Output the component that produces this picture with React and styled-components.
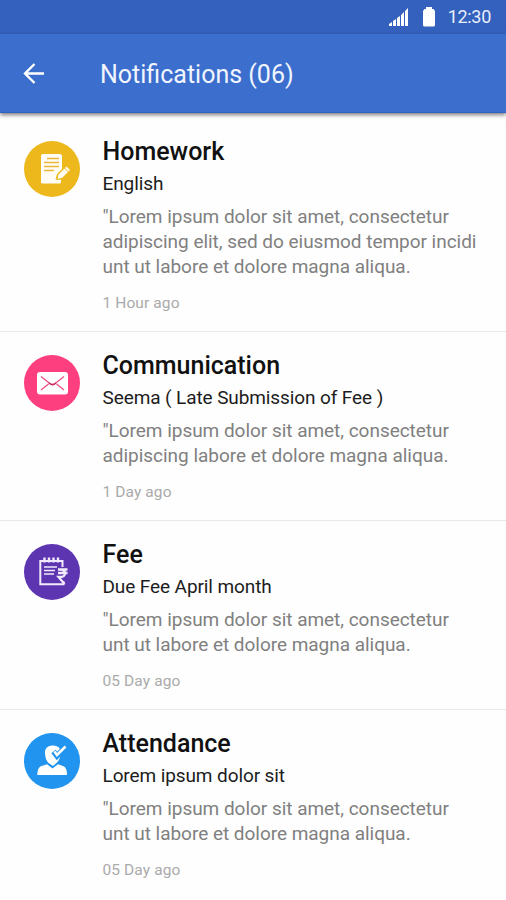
import React from "react";
import styled, { createGlobalStyle } from "styled-components";

const GlobalStyle = createGlobalStyle`
  * {
    box-sizing: border-box;
  }

  body {
    margin: 0;
    background: #fefefe;
    font-family: Roboto, "Liberation Sans", sans-serif;
    overflow: hidden;
  }
`;

const Screen = styled.div`
  width: 506px;
  height: 900px;
  overflow: hidden;
  background: #fefefe;
`;

const StatusBar = styled.div`
  height: 34px;
  padding: 0 15px 0 0;
  display: flex;
  align-items: center;
  justify-content: flex-end;
  background: #3461bd;
  color: #e6edfb;
`;

const SignalIcon = styled.svg`
  width: 22px;
  height: 20px;
  margin-right: 13px;
`;

const BatteryIcon = styled.svg`
  width: 12px;
  height: 20px;
  margin-right: 13px;
`;

const Clock = styled.span`
  font-size: 18px;
  line-height: 34px;
  letter-spacing: -0.3px;
`;

const Header = styled.header`
  height: 79px;
  padding: 0 22px;
  display: flex;
  align-items: center;
  background: #3c6ecd;
  border-bottom: 1px solid #2e63c4;
  box-shadow: 0 2px 4px rgba(0, 0, 0, 0.5);
`;

const BackButton = styled.button`
  width: 24px;
  height: 24px;
  padding: 0;
  margin-right: 54px;
  border: 0;
  background: none;
  display: flex;
`;

const HeaderTitle = styled.h1`
  margin: 4px 0 0;
  font-size: 25px;
  font-weight: 400;
  line-height: 32px;
  color: #f1f5fd;
`;

const List = styled.ul`
  margin: 0;
  padding: 5px 0 0;
  list-style: none;
`;

const Item = styled.li`
  display: flex;
  align-items: flex-start;
  padding: 19px 0 18.4px 24px;
  border-bottom: 1px solid #e8e8e8;

  &:last-child {
    border-bottom: 0;
  }
`;

const Avatar = styled.div`
  width: 56px;
  height: 56px;
  margin: 4px 22.5px 0 0;
  flex: none;
  border-radius: 50%;
  background: ${(props) => props.$color};

  svg {
    display: block;
  }
`;

const Content = styled.div`
  white-space: nowrap;
`;

const Title = styled.h2`
  margin: 0;
  font-size: 25px;
  font-weight: 500;
  line-height: 30px;
  letter-spacing: 0;
  color: #111;
`;

const Subject = styled.p`
  margin: 5px 0 0;
  font-size: 19px;
  line-height: 24px;
  letter-spacing: -0.1px;
  color: #1c1c1c;
`;

const Message = styled.p`
  margin: 9px 0 0;
  font-size: 19px;
  line-height: 24.8px;
  letter-spacing: -0.03px;
  white-space: pre-line;
  color: #808080;
`;

const Time = styled.p`
  margin: 13.2px 0 0;
  font-size: 15.5px;
  line-height: 20px;
  letter-spacing: 0.1px;
  color: #aaa;
`;

const HomeworkIcon = () => (
  <svg width="56" height="56" viewBox="0 0 56 56" fill="none">
    <path
      d="M19 13h17a2 2 0 0 1 2 2v13l-5 5-1.500 5.500h5.500v2.500a1.500 1.500 0 0 1-1.500 1.500H18.500a1.500 1.500 0 0 1-1.500-1.500V15a2 2 0 0 1 2-2z"
      fill="#fffdf5"
    />
    <path d="M23 17.500h12M20 21.500h15M20 25.500h15M20 29.500h10" stroke="#ecb83a" strokeWidth="1.700" />
    <path d="M33 38.500l1-5 8.500-8.500 4 4-8.500 8.500z" fill="#fffdf5" stroke="#ecb81c" strokeWidth="1" />
    <path d="M40.500 27l4 4" stroke="#ecb81c" strokeWidth="1" />
  </svg>
);

const MailIcon = () => (
  <svg width="56" height="56" viewBox="0 0 56 56" fill="none">
    <rect x="13" y="17" width="31" height="22.500" rx="3" fill="#fff" />
    <path d="M17 21.500l9.500 7.500q2 1.500 4 0l9.500-7.500M17 35l7.500-6M40 35l-7.500-6" stroke="#ef4f84" strokeWidth="1.300" />
    <path d="M25 28q3.500 3 7 0" stroke="#c62a60" strokeWidth="1.400" />
  </svg>
);

const FeeIcon = () => (
  <svg width="56" height="56" viewBox="0 0 56 56" fill="none" stroke="#f1eafc">
    <path d="M38.500 23v-6H16.300v23.300H39.500v-3" strokeWidth="2" />
    <path d="M20.500 13.500v5M25 13.500v5M29.500 13.500v5M34 13.500v5" strokeWidth="2.400" />
    <path d="M20 23h13M20 26.500h11M20 30h10" strokeWidth="1.500" />
    <path d="M34 25.500h9.500M34 29h9.500M34 25.500h2.500c6 0 6 7.500 0 7.500h-2l6 7" strokeWidth="2.300" />
  </svg>
);

const AttendanceIcon = () => (
  <svg width="56" height="56" viewBox="0 0 56 56" fill="none">
    <path
      d="M21 19c0-8 13-8 15-3 1.500 5 0 10-3 13.500l-4 3.500-5-3.500c-2.500-3-3-7-3-10.500z"
      fill="#fff"
    />
    <path d="M23 31.200l5.500 4.300 5.500-4.300 5.500 2q3.500 1.500 3.500 8.800H13.300q0-7 3.500-8.800z" fill="#fff" />
    <path d="M29.500 18.500l3.500 4.500 8.500-9" stroke="#2094ee" strokeWidth="5.500" />
    <path d="M30.500 18.500l2.500 3.500 8.500-8.500" stroke="#fff" strokeWidth="2.600" />
  </svg>
);

const notifications = [
  {
    title: "Homework",
    subject: "English",
    message:
      '"Lorem ipsum dolor sit amet, consectetur\nadipiscing elit, sed do eiusmod tempor incidi\nunt ut labore et dolore magna aliqua.',
    time: "1 Hour ago",
    color: "#ecb81c",
    icon: <HomeworkIcon />
  },
  {
    title: "Communication",
    subject: "Seema ( Late Submission of Fee )",
    message:
      '"Lorem ipsum dolor sit amet, consectetur\nadipiscing labore et dolore magna aliqua.',
    time: "1 Day ago",
    color: "#fd3f7f",
    icon: <MailIcon />
  },
  {
    title: "Fee",
    subject: "Due Fee April month",
    message:
      '"Lorem ipsum dolor sit amet, consectetur\nunt ut labore et dolore magna aliqua.',
    time: "05 Day ago",
    color: "#5e35b1",
    icon: <FeeIcon />
  },
  {
    title: "Attendance",
    subject: "Lorem ipsum dolor sit",
    message:
      '"Lorem ipsum dolor sit amet, consectetur\nunt ut labore et dolore magna aliqua.',
    time: "05 Day ago",
    color: "#2094ee",
    icon: <AttendanceIcon />
  }
];

const Notification = ({ title, subject, message, time, color, icon }) => (
  <Item>
    <Avatar $color={color}>{icon}</Avatar>
    <Content>
      <Title>{title}</Title>
      <Subject>{subject}</Subject>
      <Message>{message}</Message>
      <Time>{time}</Time>
    </Content>
  </Item>
);

const App = () => (
  <Screen>
    <GlobalStyle />
    <StatusBar>
      <SignalIcon viewBox="0 0 22 20" fill="#fff">
        <path d="M1 19v-2l3-2v4zM5 19v-5l3-2v7zM9 19v-8l3-2v10zM13 19V8l3-3v14zM17 19V4l3-3v18z" />
      </SignalIcon>
      <BatteryIcon viewBox="0 0 12 20" fill="#fff">
        <path d="M3 0h6v2h1.500L12 4v14a1.500 1.500 0 0 1-1.500 1.500h-9A1.500 1.500 0 0 1 0 18V4l1.500-2H3z" />
      </BatteryIcon>
      <Clock>12:30</Clock>
    </StatusBar>
    <Header>
      <BackButton aria-label="Back">
        <svg width="24" height="24" viewBox="0 0 24 24" fill="none" stroke="#fff" strokeWidth="2.400">
          <path d="M12.500 3L3 12.500l9.500 9.500M3 12.500h19" />
        </svg>
      </BackButton>
      <HeaderTitle>Notifications (06)</HeaderTitle>
    </Header>
    <List>
      {notifications.map((item) => (
        <Notification key={item.title} {...item} />
      ))}
    </List>
  </Screen>
);

export default App;
